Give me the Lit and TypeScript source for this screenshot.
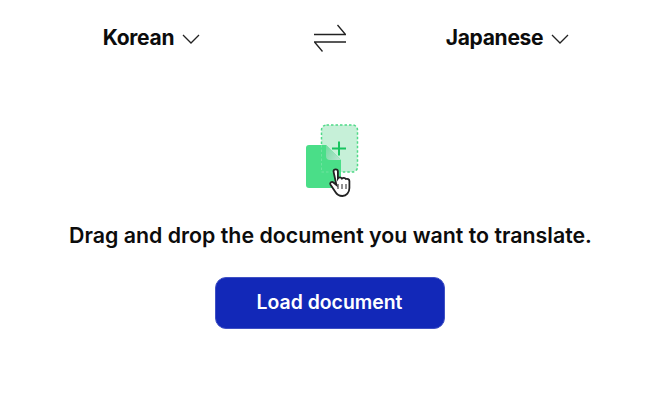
import { LitElement, html, css } from "lit";
import { customElement } from "lit/decorators.js";

const chevron = html`<svg class="chev" width="18" height="10" viewBox="0 0 18 10" fill="none"><path d="M1 1l8 8 8-8" stroke="#222" stroke-width="1.3"/></svg>`;

@customElement("app-root")
export class AppRoot extends LitElement {
  static styles = css`
    :host { display: flex; flex-direction: column; align-items: center; width: 659px; height: 409px; background: #fff; font-family: Inter, "Liberation Sans", sans-serif; color: #0c0c0c; overflow: hidden; }
    .top { display: grid; grid-template-columns: repeat(3, 178px); justify-content: center; justify-items: center; align-items: center; height: 38px; margin-top: 19px; }
    .lang { display: flex; align-items: center; gap: 8px; font-size: 21px; font-weight: 700; letter-spacing: -0.3px; line-height: 38px; }
    .chev { margin-top: 2px; }
    .art { display: block; margin: 67px 0 0 7px; }
    .msg { margin: 24px 0 0 2px; font-size: 21.35px; font-weight: 600; line-height: 28px; }
    .btn { margin-top: 28px; width: 230px; height: 52px; box-sizing: border-box; border: 1px solid #3f50c4; border-radius: 11px; background: #1228b8; color: #fff; font: 600 19.4px/1 Inter, "Liberation Sans", sans-serif; }
  `;
  render() {
    return html`
      <div class="top">
        <div class="lang">Korean ${chevron}</div>
        <svg width="32" height="30" viewBox="0 0 32 30" fill="none" stroke="#222" stroke-width="1.3">
          <path d="M0 11.5h31.5L23.5 2"/>
          <path d="M32 19H.5l8 9.5"/>
        </svg>
        <div class="lang">Japanese ${chevron}</div>
      </div>
      <svg class="art" width="54" height="73" viewBox="0 0 54 73" fill="none">
        <defs>
          <linearGradient id="fold" x1="0" y1="0" x2="1" y2="0.6">
            <stop offset="0" stop-color="#6fdc9f"/>
            <stop offset="1" stop-color="#b4e2cc"/>
          </linearGradient>
        </defs>
        <rect x="15.500" y="1" width="36" height="47" rx="5" fill="#c6f0d8" stroke="#4fd987" stroke-width="1.500" stroke-dasharray="2.500 2"/>
        <path d="M3 21h17l15 15v25a3 3 0 0 1-3 3H3a3 3 0 0 1-3-3V24a3 3 0 0 1 3-3z" fill="#4ade88"/>
        <path d="M20 21l15 15H24a4 4 0 0 1-4-4z" fill="url(#fold)"/>
        <path d="M15.500 21V48H27" stroke="#6ee29f" stroke-dasharray="2.500 2"/>
        <path d="M33 17.500v14M26 24.500h14" stroke="#17c45f" stroke-width="2"/>
        <path d="M27.500 47.500a2.200 2.200 0 0 1 4.400 0v7c1-1.500 3-1.500 4 0 1-1 3-1 4 .5 1.500-.5 3.500 0 3.500 2v7c0 4.500-3 8-7 8-3.500 0-5.500-1.500-7-4l-5-7.500c-1-2 1.500-3.500 3-2l3 2.500z" fill="#fff" stroke="#222" stroke-width="1.800"/>
        <path d="M32 60v5M36 60v5M40 60v5" stroke="#222" stroke-width="1"/>
      </svg>
      <p class="msg">Drag and drop the document you want to translate.</p>
      <button class="btn">Load document</button>
    `;
  }
}
